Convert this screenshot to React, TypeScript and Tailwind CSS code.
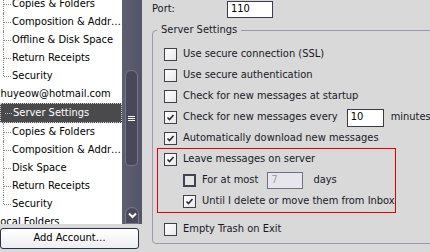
import React from "react";

const FONT = { fontFamily: '"DejaVu Sans Condensed", "DejaVu Sans", sans-serif' };

function Check({ checked, variant }: { checked?: boolean; variant?: "thick" }) {
  if (variant === "thick") {
    return (
      <span className="w-[13px] h-[13px] border-2 border-[#3c4456] bg-[#e4e4e4] shrink-0 box-border" />
    );
  }
  return (
    <span className="relative w-[13px] h-[13px] border border-[#40404e] bg-gradient-to-br from-[#ffffff] to-[#e8e8e8] shrink-0 box-border flex items-center justify-center">
      {checked && (
        <svg width="9" height="9" viewBox="0 0 9 9">
          <polyline points="1.5,4.5 3.5,6.5 7.5,2" fill="none" stroke="#2a2a3a" strokeWidth="1.6" />
        </svg>
      )}
    </span>
  );
}

function Row({
  checked,
  label,
  h = "h-[21px]",
  variant,
  children,
}: {
  checked?: boolean;
  label: string;
  h?: string;
  variant?: "thick";
  children?: React.ReactNode;
}) {
  return (
    <div className={`flex items-center ${h}`}>
      <Check checked={checked} variant={variant} />
      <span className="ml-[6px] whitespace-nowrap">{label}</span>
      {children}
    </div>
  );
}

const treeTop = [
  "Copies & Folders",
  "Composition & Addr\u2026",
  "Offline & Disk Space",
  "Return Receipts",
  "Security",
];
const treeBottom = [
  "Copies & Folders",
  "Composition & Addr\u2026",
  "Disk Space",
  "Return Receipts",
  "Security",
];

function TreeChild({ label, last }: { label: string; last?: boolean }) {
  return (
    <div className="relative h-[18px] flex items-center pl-[12px] whitespace-nowrap">
      <span
        className={`absolute left-[3px] top-0 w-0 border-l border-dotted border-[#8a8a8a] ${last ? "h-[9px]" : "h-[18px]"}`}
      />
      <span className="absolute left-[4px] top-[9px] w-[7px] h-0 border-t border-dotted border-[#8a8a8a]" />
      {label}
    </div>
  );
}

export default function App() {
  return (
    <div
      className="w-[430px] h-[252px] flex bg-[#d8d9d8] overflow-hidden text-[11px] text-[#181828]"
      style={FONT}
    >
      {/* left column */}
      <div className="w-[142px] shrink-0 flex flex-col">
        <div className="h-[224px] flex overflow-hidden">
          <div className="w-[122px] bg-white overflow-hidden text-black -mt-[5px]">
            {treeTop.map((t, i) => (
              <TreeChild key={"a" + i} label={t} last={i === treeTop.length - 1} />
            ))}
            <div className="h-[18px] flex items-center -ml-[5px] whitespace-nowrap">chuyeow@hotmail.com</div>
            <div className="relative h-[20px] flex items-center pl-[12px] bg-[#4a4a4c] text-white border border-dotted border-[#d0d0d0] whitespace-nowrap">
              <span className="absolute left-[4px] top-[9px] w-[7px] h-0 border-t border-dotted border-[#c0c0c0]" />
              Server Settings
            </div>
            {treeBottom.map((t, i) => (
              <TreeChild key={"b" + i} label={t} last={i === treeBottom.length - 1} />
            ))}
            <div className="h-[18px] flex items-center -ml-[5px] whitespace-nowrap">Local Folders</div>
          </div>
          {/* scrollbar */}
          <div className="relative w-[20px] bg-gradient-to-r from-[#5e5e6e] to-[#54546a]">
            <div className="absolute left-[3px] top-[70px] w-[13px] h-[96px] rounded-t-[6px] rounded-b-[4px] bg-[#48485a] border border-[#76768a] flex items-end justify-center pb-[44px]">
              <span className="flex flex-col gap-[1px]">
                <span className="block w-[7px] h-[1px] bg-white" />
                <span className="block w-[7px] h-[1px] bg-white" />
                <span className="block w-[7px] h-[1px] bg-white" />
              </span>
            </div>
            <div className="absolute left-[3px] top-[207px] w-[14px] h-[17px] rounded-t-[7px] bg-[#4a4a5c] border border-[#7a7a8c] flex items-center justify-center">
              <svg width="9" height="7" viewBox="0 0 9 7">
                <polyline points="1,1.5 4.5,5 8,1.5" fill="none" stroke="#ffffff" strokeWidth="2" />
              </svg>
            </div>
          </div>
        </div>
        <div className="mt-[4px] h-[21px] w-[139px] rounded-[3px] border border-[#26304e] bg-gradient-to-b from-[#ffffff] to-[#eeeef0] flex items-center justify-center text-black">
          Add Account…
        </div>
      </div>

      {/* right panel */}
      <div className="flex-1 flex flex-col overflow-hidden">
        <div className="h-[18px] flex items-center pl-[10px]">
          <span className="w-[75px]">Port:</span>
          <span className="h-[17px] w-[46px] bg-white border border-[#3a3a4a] flex items-center pl-[3px] text-black">110</span>
        </div>
        <fieldset className="ml-[10px] mt-[5px] w-[320px] border border-[#9a9aae] rounded-[4px] pt-[7px] pb-[3px] pl-0">
          <legend className="ml-[4px] px-[4px] leading-[14px]">Server Settings</legend>
          <div className="pl-[11px]">
            <Row label="Use secure connection (SSL)" />
            <Row label="Use secure authentication" />
            <Row label="Check for new messages at startup" />
            <Row checked label="Check for new messages every">
              <span className="ml-[9px] h-[18px] w-[37px] bg-white border border-[#3a3a4a] flex items-center pl-[3px] text-black">10</span>
              <span className="ml-[7px]">minutes</span>
            </Row>
            <Row checked label="Automatically download new messages" h="h-[20px]" />
          </div>
          <div className="ml-[4px] w-[239px] border border-[#e00000] pl-[6px]">
            <Row checked label="Leave messages on server" />
            <div className="pl-[19px]">
              <Row label="For at most" variant="thick">
                <span className="ml-[9px] h-[17px] w-[36px] bg-[#e6e6ec] border border-[#6c7484] flex items-center pl-[3px] text-[#a0a0a8]">7</span>
                <span className="ml-[10px]">days</span>
              </Row>
              <Row checked label="Until I delete or move them from Inbox" />
            </div>
          </div>
          <div className="pl-[11px] mt-[6px]">
            <Row label="Empty Trash on Exit" />
          </div>
        </fieldset>
      </div>
    </div>
  );
}
